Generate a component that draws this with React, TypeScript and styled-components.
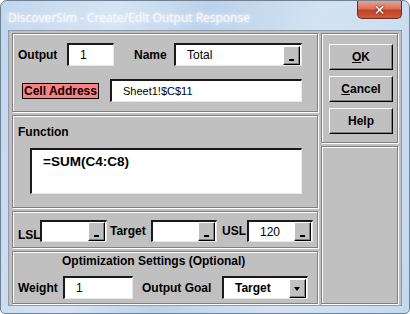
import React from "react";
import styled, { createGlobalStyle } from "styled-components";

const GlobalStyle = createGlobalStyle`
  html, body {
    margin: 0;
    padding: 0;
    width: 410px;
    height: 314px;
    overflow: hidden;
    background: #ffffff;
  }
  body {
    font-family: "Liberation Sans", Arial, sans-serif;
  }
`;

const Window = styled.div`
  width: 410px;
  height: 314px;
  box-sizing: border-box;
  border: 1px solid #6f8092;
  border-radius: 7px 7px 5px 5px;
  background: linear-gradient(100deg, #c2d6ec 0%, #d6e5f4 25%, #bcd2ea 45%, #d3e3f3 70%, #c5d9ee 100%);
  padding: 0 7px 7px 7px;
  display: flex;
  flex-direction: column;
`;

const TitleBar = styled.div`
  height: 29px;
  display: flex;
  align-items: flex-start;
  justify-content: space-between;
`;

const Title = styled.span`
  margin-top: 8px;
  font-family: "Open Sans", "Noto Sans", sans-serif;
  font-size: 12px;
  color: #f4f8fc;
  text-shadow: 0 0 6px #ffffff, 0 0 2px #e6effa;
`;

const CloseButton = styled.div`
  width: 45px;
  height: 18px;
  box-sizing: border-box;
  border: 1px solid #6b2a22;
  border-top: none;
  border-radius: 0 0 5px 5px;
  background: linear-gradient(#e9a28f 0%, #d9725c 45%, #c2412a 55%, #d05a3c 100%);
  display: flex;
  align-items: center;
  justify-content: center;
  font-family: "DejaVu Sans", sans-serif;
  font-weight: bold;
  font-size: 14px;
  color: #ffffff;
  text-shadow: 0 0 1px #5a1a10, 0 0 2px #5a1a10;
`;

const Client = styled.div`
  flex: 1;
  box-sizing: border-box;
  background: #c0c0c0;
  border: 1px solid #8d9aa8;
  padding: 2px 3px 1px 3px;
  display: grid;
  grid-template-columns: 306px 77px;
  column-gap: 3px;
`;

const Column = styled.div`
  display: flex;
  flex-direction: column;
  gap: 3px;
`;

const Frame = styled.div<{ $h: number }>`
  height: ${(p) => p.$h}px;
  box-sizing: border-box;
  border: 1px solid #808080;
  box-shadow: inset 1px 1px 0 #ffffff, 1px 1px 0 #ffffff;
  display: flex;
  flex-direction: column;
`;

const Row = styled.div<{ $top?: number }>`
  display: flex;
  align-items: center;
  margin-top: ${(p) => p.$top ?? 0}px;
`;

const Label = styled.span<{ $w?: number; $ml?: number; $low?: boolean }>`
  font-weight: bold;
  font-size: 12px;
  color: #000;
  width: ${(p) => (p.$w ? `${p.$w}px` : "auto")};
  margin-left: ${(p) => p.$ml ?? 0}px;
  align-self: ${(p) => (p.$low ? "flex-end" : "auto")};
  white-space: nowrap;
`;

const RedLabel = styled.span`
  width: 77px;
  height: 16px;
  box-sizing: border-box;
  border: 1px solid #000;
  background: #ff8080;
  font-weight: bold;
  font-size: 12px;
  line-height: 14px;
  text-align: center;
  margin-left: 9px;
`;

const Field = styled.div<{ $w: number; $h?: number; $ml?: number; $bold?: boolean; $size?: number }>`
  width: ${(p) => p.$w}px;
  height: ${(p) => p.$h ?? 23}px;
  margin-left: ${(p) => p.$ml ?? 0}px;
  box-sizing: border-box;
  background: #fff;
  border-style: solid;
  border-width: 2px 1px 1px 2px;
  border-color: #1a1a1a #e8e8e8 #e8e8e8 #1a1a1a;
  display: flex;
  align-items: center;
  justify-content: space-between;
  padding-left: 11px;
  padding-right: 1px;
  font-size: ${(p) => p.$size ?? 12}px;
  font-weight: ${(p) => (p.$bold ? "bold" : "normal")};
  color: #000;
`;

const FieldButton = styled.span`
  width: 17px;
  height: 19px;
  box-sizing: border-box;
  background: #c0c0c0;
  border-style: solid;
  border-width: 1px;
  border-color: #ffffff #000000 #000000 #ffffff;
  box-shadow: inset -1px -1px 0 #808080;
  position: relative;
  &::after {
    content: "";
    position: absolute;
    left: 5px;
    bottom: 3px;
    width: 5px;
    height: 2px;
    background: #000;
  }
`;

const ArrowButton = styled(FieldButton)`
  &::after {
    left: 4px;
    bottom: 6px;
    width: 0;
    height: 0;
    background: none;
    border-left: 3.5px solid transparent;
    border-right: 3.5px solid transparent;
    border-top: 4px solid #000;
  }
`;

const FunctionBox = styled.div`
  width: 272px;
  height: 46px;
  margin: 9px 0 0 17px;
  box-sizing: border-box;
  background: #fff;
  border-style: solid;
  border-width: 2px 1px 1px 2px;
  border-color: #1a1a1a #e8e8e8 #e8e8e8 #1a1a1a;
  padding: 4px 0 0 11px;
  font-weight: bold;
  font-size: 13.5px;
  color: #000;
`;

const FrameTitle = styled.div<{ $ml: number; $top: number }>`
  margin: ${(p) => p.$top}px 0 0 ${(p) => p.$ml}px;
  font-weight: bold;
  font-size: 12px;
  color: #000;
`;

const ButtonStack = styled.div`
  display: flex;
  flex-direction: column;
  gap: 6px;
  padding: 10px 0 0 7px;
`;

const DialogButton = styled.button`
  width: 64px;
  height: 26px;
  box-sizing: border-box;
  background: #c0c0c0;
  border-style: solid;
  border-width: 1px;
  border-color: #ffffff #000000 #000000 #ffffff;
  box-shadow: inset -1px -1px 0 #808080;
  font-family: "Liberation Sans", Arial, sans-serif;
  font-weight: bold;
  font-size: 12px;
  color: #000;
  padding: 0;
  u {
    text-decoration: underline;
  }
`;

export default function App() {
  return (
    <>
      <GlobalStyle />
      <Window>
        <TitleBar>
          <Title>DiscoverSim - Create/Edit Output Response</Title>
          <CloseButton>✕</CloseButton>
        </TitleBar>
        <Client>
          <Column>
            <Frame $h={79}>
              <Row $top={9}>
                <Label $w={49} $ml={5}>Output</Label>
                <Field $w={47}>1</Field>
                <Label $w={40} $ml={20}>Name</Label>
                <Field $w={128}>
                  Total
                  <FieldButton />
                </Field>
              </Row>
              <Row $top={13}>
                <RedLabel>Cell Address</RedLabel>
                <Field $w={192} $ml={11} $size={11}>
                  Sheet1!$C$11
                </Field>
              </Row>
            </Frame>
            <Frame $h={93}>
              <FrameTitle $ml={5} $top={9}>Function</FrameTitle>
              <FunctionBox>=SUM(C4:C8)</FunctionBox>
            </Frame>
            <Frame $h={37}>
              <Row $top={8}>
                <Label $w={22} $ml={5} $low>LSL</Label>
                <Field $w={67} $h={22}>
                  <span />
                  <FieldButton />
                </Field>
                <Label $w={41} $ml={3}>Target</Label>
                <Field $w={66} $h={22}>
                  <span />
                  <FieldButton />
                </Field>
                <Label $w={25} $ml={5}>USL</Label>
                <Field $w={66} $h={22}>
                  120
                  <FieldButton />
                </Field>
              </Row>
            </Frame>
            <Frame $h={53}>
              <FrameTitle $ml={49} $top={2}>Optimization Settings (Optional)</FrameTitle>
              <Row $top={8}>
                <Label $w={45} $ml={5}>Weight</Label>
                <Field $w={70}>1</Field>
                <Label $w={80} $ml={9}>Output Goal</Label>
                <Field $w={86} $bold>
                  Target
                  <ArrowButton />
                </Field>
              </Row>
            </Frame>
          </Column>
          <Column>
            <Frame $h={110}>
              <ButtonStack>
                <DialogButton>
                  <u>O</u>K
                </DialogButton>
                <DialogButton>
                  <u>C</u>ancel
                </DialogButton>
                <DialogButton>Help</DialogButton>
              </ButtonStack>
            </Frame>
            <Frame $h={158} />
          </Column>
        </Client>
      </Window>
    </>
  );
}
